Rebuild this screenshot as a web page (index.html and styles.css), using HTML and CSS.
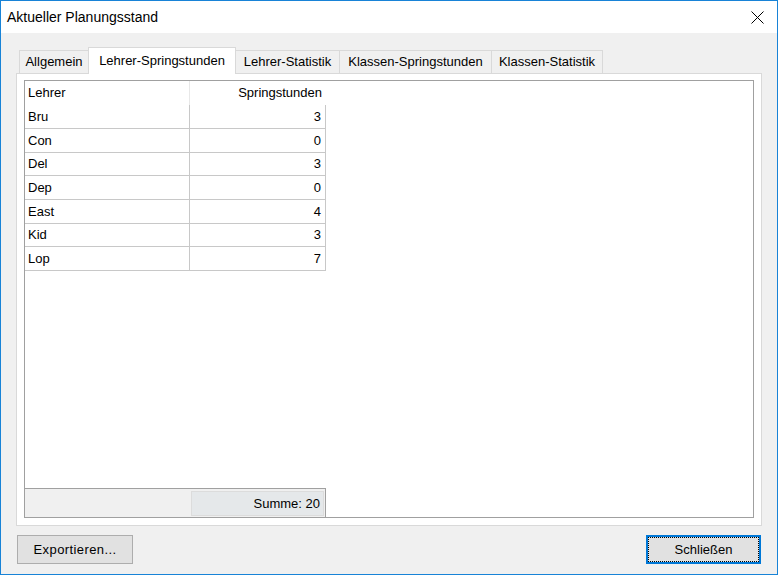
FILE: index.html
```html
<!DOCTYPE html>
<html lang="de">
<head>
<meta charset="utf-8">
<title>Aktueller Planungsstand</title>
<link rel="stylesheet" href="styles.css">
</head>
<body>
<div class="window">
  <div class="titlebar">
    <span class="title">Aktueller Planungsstand</span>
    <svg class="close" width="13" height="13" viewBox="0 0 13 13"><path d="M0.5 0.5 L12.5 12.5 M12.5 0.5 L0.5 12.5" stroke="#000" stroke-width="1" fill="none"/></svg>
  </div>
  <div class="body">
    <div class="tabstrip">
      <div class="tab t1">Allgemein</div>
      <div class="tab t2 active">Lehrer-Springstunden</div>
      <div class="tab t3">Lehrer-Statistik</div>
      <div class="tab t4">Klassen-Springstunden</div>
      <div class="tab t5">Klassen-Statistik</div>
    </div>
    <div class="panel">
      <div class="grid">
        <div class="table">
          <div class="row head"><div class="c1">Lehrer</div><div class="c2">Springstunden</div></div>
          <div class="row"><div class="c1">Bru</div><div class="c2">3</div></div>
          <div class="row"><div class="c1">Con</div><div class="c2">0</div></div>
          <div class="row short"><div class="c1">Del</div><div class="c2">3</div></div>
          <div class="row"><div class="c1">Dep</div><div class="c2">0</div></div>
          <div class="row"><div class="c1">East</div><div class="c2">4</div></div>
          <div class="row short"><div class="c1">Kid</div><div class="c2">3</div></div>
          <div class="row"><div class="c1">Lop</div><div class="c2">7</div></div>
        </div>
        <div class="footer"><div class="sumcell">Summe: 20</div></div>
      </div>
    </div>
    <div class="buttons">
      <button class="btn export">Exportieren...</button>
      <button class="btn default">Schließen</button>
    </div>
  </div>
</div>
</body>
</html>
```
FILE: styles.css
```css
* { box-sizing: border-box; }
html, body { margin: 0; padding: 0; }
body {
  font-family: "Liberation Sans", Arial, sans-serif;
  font-size: 13px;
  color: #000;
  background: #f0f0f0;
}
.window {
  width: 778px;
  height: 575px;
  border: 1px solid #1883d7;
  background: #f0f0f0;
  display: flex;
  flex-direction: column;
}
.titlebar {
  height: 32px;
  flex: none;
  background: #fff;
  display: flex;
  align-items: center;
  justify-content: space-between;
  padding: 0 13px 0 6px;
}
.title { font-size: 14px; }
.close { display: block; }

.body {
  flex: 1;
  display: flex;
  flex-direction: column;
  padding: 14px 15px 10px 15px;
}
.tabstrip {
  height: 26px;
  display: flex;
  align-items: flex-end;
  padding-left: 3px;
}
.tab {
  height: 23px;
  border: 1px solid #d9d9d9;
  border-bottom: 0;
  background: #f0f0f0;
  display: flex;
  align-items: center;
  justify-content: center;
  margin-left: -1px;
  padding-bottom: 1px;
  white-space: nowrap;
}
.t1 { width: 70px; margin-left: 0; }
.t2 { width: 148px; }
.t3 { width: 105px; }
.t4 { width: 153px; }
.t5 { width: 112px; }
.tab.active {
  height: 27px;
  margin-bottom: -1px;
  background: #fff;
  position: relative;
  z-index: 1;
  padding-bottom: 2px;
}
.panel {
  height: 453px;
  flex: none;
  border: 1px solid #d9d9d9;
  background: #fff;
  padding: 6px 7px 7px 7px;
  display: flex;
}
.grid {
  flex: 1;
  border: 1px solid #a0a0a0;
  background: #fff;
  display: flex;
  flex-direction: column;
}
.table { width: 301px; }
.row {
  display: flex;
  height: 24px;
  border-bottom: 1px solid #c8c8c8;
}
.row.short { height: 23px; }
.row > div {
  display: flex;
  align-items: center;
  padding-bottom: 1px;
}
.c1 {
  width: 165px;
  border-right: 1px solid #c8c8c8;
  padding-left: 3px;
}
.c2 {
  width: 136px;
  border-right: 1px solid #c8c8c8;
  justify-content: flex-end;
  padding-right: 4px;
}
.row.head { border-bottom: 0; height: 24px; }
.row.head .c1 { border-right-color: #e8e8e8; }
.row.head .c2 { border-right: 0; }

.footer {
  margin-top: auto;
  width: 301px;
  height: 29px;
  border-top: 1px solid #a0a0a0;
  border-right: 1px solid #a0a0a0;
  background: #f0f0f0;
  display: flex;
  justify-content: flex-end;
  padding: 2px 1px 1px 0;
}
.sumcell {
  width: 133px;
  background: #e5e8ea;
  border: 1px solid #dcdcdc;
  display: flex;
  align-items: center;
  justify-content: flex-end;
  padding-right: 3px;
}

.buttons {
  margin-top: 9px;
  height: 29px;
  flex: none;
  display: flex;
  justify-content: space-between;
  padding: 0 1px;
}
.btn {
  width: 116px;
  height: 29px;
  border: 1px solid #adadad;
  background: #e1e1e1;
  font-family: inherit;
  font-size: 13px;
  color: #000;
  padding: 0 0 1px 0;
  margin: 0;
}
.btn.export { letter-spacing: 0.4px; }
.btn.default {
  width: 115px;
  border-color: #0078d7;
  box-shadow: inset 0 0 0 1px #0078d7;
  outline: 1px dotted #000;
  outline-offset: -3px;
}
```
